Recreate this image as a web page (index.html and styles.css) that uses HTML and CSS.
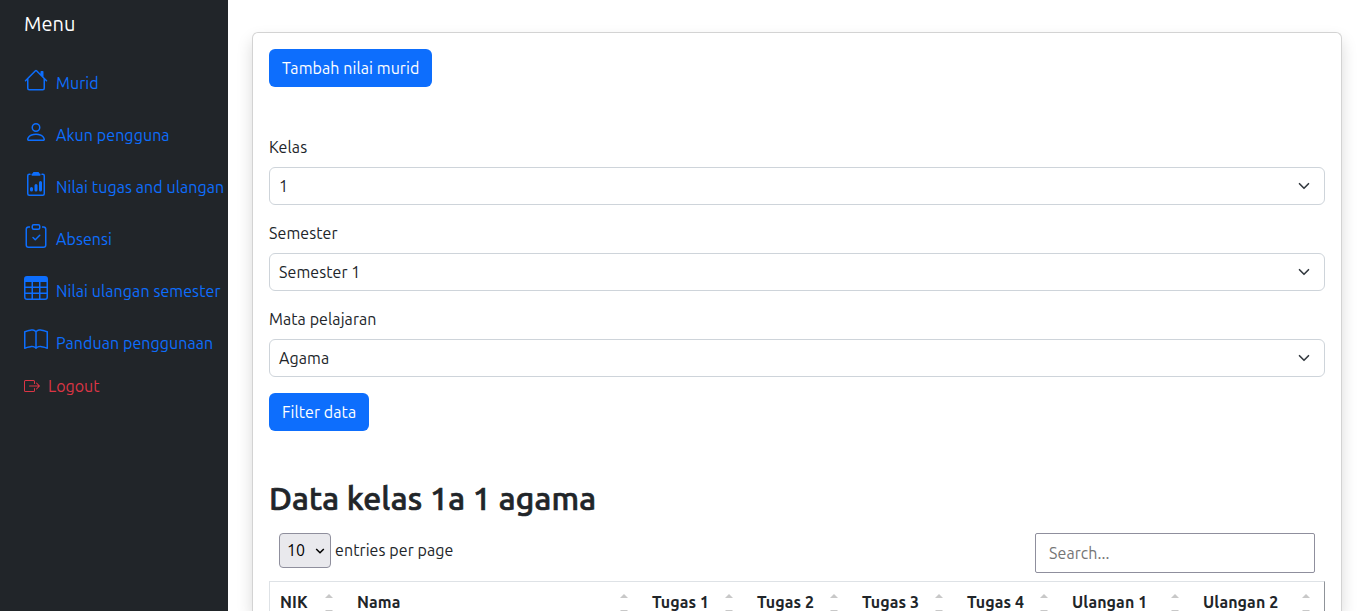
FILE: index.html
```html
<!DOCTYPE html>
<html lang="id">
<head>
<meta charset="utf-8">
<title>Nilai murid</title>
<link rel="stylesheet" href="styles.css">
</head>
<body>
<div class="layout">
  <nav class="sidebar">
    <div class="brand">Menu</div>
    <a class="item"><svg class="icon" viewBox="0 0 16 16"><path d="M8.707 1.5a1 1 0 0 0-1.414 0L.646 8.146a.5.5 0 0 0 .708.708L2 8.207V13.5A1.5 1.5 0 0 0 3.5 15h9a1.5 1.5 0 0 0 1.5-1.5V8.207l.646.647a.5.5 0 0 0 .708-.708L13 5.793V2.5a.5.5 0 0 0-.5-.5h-1a.5.5 0 0 0-.5.5v1.293zM13 7.207V13.5a.5.5 0 0 1-.5.5h-9a.5.5 0 0 1-.5-.5V7.207l5-5z"/></svg><span>Murid</span></a>
    <a class="item"><svg class="icon" viewBox="0 0 16 16"><path d="M8 8a3 3 0 1 0 0-6 3 3 0 0 0 0 6m2-3a2 2 0 1 1-4 0 2 2 0 0 1 4 0m4 8c0 1-1 1-1 1H3s-1 0-1-1 1-4 6-4 6 3 6 4m-1-.004c-.001-.246-.154-.986-.832-1.664C11.516 10.68 10.289 10 8 10s-3.516.68-4.168 1.332c-.678.678-.83 1.418-.832 1.664z"/></svg><span>Akun pengguna</span></a>
    <a class="item"><svg class="icon" viewBox="0 0 16 16"><path d="M9.5 0a.5.5 0 0 1 .5.5.5.5 0 0 0 .5.5.5.5 0 0 1 .5.5V2a.5.5 0 0 1-.5.5h-5A.5.5 0 0 1 5 2v-.5a.5.5 0 0 1 .5-.5.5.5 0 0 0 .5-.5.5.5 0 0 1 .5-.5z"/><path d="M3 2.5a.5.5 0 0 1 .5-.5H4a.5.5 0 0 0 0-1h-.5A1.5 1.5 0 0 0 2 2.5v12A1.5 1.5 0 0 0 3.5 16h9a1.5 1.5 0 0 0 1.5-1.5v-12A1.5 1.5 0 0 0 12.5 1H12a.5.5 0 0 0 0 1h.5a.5.5 0 0 1 .5.5v12a.5.5 0 0 1-.5.5h-9a.5.5 0 0 1-.5-.5z"/><path d="M10 7a1 1 0 1 1 2 0v5a1 1 0 1 1-2 0zm-6 4a1 1 0 1 1 2 0v1a1 1 0 1 1-2 0zm4-3a1 1 0 0 0-1 1v3a1 1 0 1 0 2 0V9a1 1 0 0 0-1-1"/></svg><span>Nilai tugas and ulangan</span></a>
    <a class="item"><svg class="icon" viewBox="0 0 16 16"><path d="M10.854 7.146a.5.5 0 0 1 0 .708l-3 3a.5.5 0 0 1-.708 0l-1.5-1.5a.5.5 0 1 1 .708-.708L7.5 9.793l2.646-2.647a.5.5 0 0 1 .708 0"/><path d="M4 1.5H3a2 2 0 0 0-2 2V14a2 2 0 0 0 2 2h10a2 2 0 0 0 2-2V3.5a2 2 0 0 0-2-2h-1v1h1a1 1 0 0 1 1 1V14a1 1 0 0 1-1 1H3a1 1 0 0 1-1-1V3.5a1 1 0 0 1 1-1h1z"/><path d="M9.5 1a.5.5 0 0 1 .5.5v1a.5.5 0 0 1-.5.5h-3a.5.5 0 0 1-.5-.5v-1a.5.5 0 0 1 .5-.5zm-3-1A1.5 1.5 0 0 0 5 1.5v1A1.5 1.5 0 0 0 6.5 4h3A1.5 1.5 0 0 0 11 2.5v-1A1.5 1.5 0 0 0 9.5 0z"/></svg><span>Absensi</span></a>
    <a class="item"><svg class="icon" viewBox="0 0 16 16"><path d="M0 2a2 2 0 0 1 2-2h12a2 2 0 0 1 2 2v12a2 2 0 0 1-2 2H2a2 2 0 0 1-2-2zm15 2h-4v3h4zm0 4h-4v3h4zm0 4h-4v3h3a1 1 0 0 0 1-1zm-5 3v-3H6v3zm-5 0v-3H1v2a1 1 0 0 0 1 1zm-4-4h4V8H1zm0-4h4V4H1zm5-3v3h4V4zm4 4H6v3h4z"/></svg><span>Nilai ulangan semester</span></a>
    <a class="item"><svg class="icon" viewBox="0 0 16 16"><path d="M1 2.828c.885-.37 2.154-.769 3.388-.893 1.33-.134 2.458.063 3.112.752v9.746c-.935-.53-2.12-.603-3.213-.493-1.18.12-2.37.461-3.287.811zm7.5-.141c.654-.689 1.782-.886 3.112-.752 1.234.124 2.503.523 3.388.893v9.923c-.918-.35-2.107-.692-3.287-.81-1.094-.111-2.278-.039-3.213.492zM8 1.783C7.015.936 5.587.81 4.287.94c-1.514.153-3.042.672-3.994 1.105A.5.5 0 0 0 0 2.5v11a.5.5 0 0 0 .707.455c.882-.4 2.303-.881 3.68-1.02 1.409-.142 2.59.087 3.223.877a.5.5 0 0 0 .78 0c.633-.79 1.814-1.019 3.222-.877 1.378.139 2.8.62 3.681 1.02A.5.5 0 0 0 16 13.5v-11a.5.5 0 0 0-.293-.455c-.952-.433-2.48-.952-3.994-1.105C10.413.809 8.985.936 8 1.783"/></svg><span>Panduan penggunaan</span></a>
    <a class="item logout"><svg class="icon" viewBox="0 0 16 16"><path d="M10 12.5a.5.5 0 0 1-.5.5h-8a.5.5 0 0 1-.5-.5v-9a.5.5 0 0 1 .5-.5h8a.5.5 0 0 1 .5.5v2a.5.5 0 0 0 1 0v-2A1.5 1.5 0 0 0 9.5 2h-8A1.5 1.5 0 0 0 0 3.5v9A1.5 1.5 0 0 0 1.5 14h8a1.5 1.5 0 0 0 1.5-1.5v-2a.5.5 0 0 0-1 0z"/><path d="M15.854 8.354a.5.5 0 0 0 0-.708l-3-3a.5.5 0 0 0-.708.708L14.293 7.5H5.5a.5.5 0 0 0 0 1h8.793l-2.147 2.146a.5.5 0 0 0 .708.708z"/></svg><span>Logout</span></a>
  </nav>
  <main class="content">
    <section class="card">
      <a class="btn btn-add">Tambah nilai murid</a>
      <div class="field"><label>Kelas</label>
        <div class="select"><span>1</span><svg class="chev" viewBox="0 0 16 16"><path d="m2 5 6 6 6-6"/></svg></div></div>
      <div class="field"><label>Semester</label>
        <div class="select"><span>Semester 1</span><svg class="chev" viewBox="0 0 16 16"><path d="m2 5 6 6 6-6"/></svg></div></div>
      <div class="field"><label>Mata pelajaran</label>
        <div class="select"><span>Agama</span><svg class="chev" viewBox="0 0 16 16"><path d="m2 5 6 6 6-6"/></svg></div></div>
      <a class="btn btn-filter">Filter data</a>
      <h2 class="title">Data kelas 1a 1 agama</h2>
      <div class="toolbar">
        <div class="perpage"><div class="count"><span>10</span><svg class="mini" viewBox="0 0 10 10"><path d="m1.2 3 3.8 3.8 3.8-3.8"/></svg></div><span class="entries">entries per page</span></div>
        <input class="search" type="text" placeholder="Search...">
      </div>
      <div class="thead">
        <div class="th">NIK<i class="sort"></i></div>
        <div class="th">Nama<i class="sort"></i></div>
        <div class="th">Tugas 1<i class="sort"></i></div>
        <div class="th">Tugas 2<i class="sort"></i></div>
        <div class="th">Tugas 3<i class="sort"></i></div>
        <div class="th">Tugas 4<i class="sort"></i></div>
        <div class="th">Ulangan 1<i class="sort"></i></div>
        <div class="th">Ulangan 2<i class="sort"></i></div>
      </div>
    </section>
  </main>
</div>
</body>
</html>
```
FILE: styles.css
```css
* { box-sizing: border-box; }
body {
  margin: 0;
  height: 611px;
  overflow: hidden;
  background: #fff;
  color: #212529;
  font: 16px/24px Ubuntu, "Noto Sans", sans-serif;
  letter-spacing: .08px;
}
.layout { display: flex; height: 611px; }
.sidebar { width: 228px; flex: none; padding: 9px 0 0 24px; background: #212529; white-space: nowrap; }
.brand { height: 59px; font-size: 20px; line-height: 30px; color: #fff; }
.item { display: flex; gap: 8px; height: 52px; color: #0d6efd; }
.item span { padding-top: 3px; }
.icon { width: 24px; height: 24px; flex: none; fill: currentColor; }
.logout { margin-top: -6px; color: #dc3545; letter-spacing: 0; }
.logout .icon { width: 16px; height: 16px; margin-top: 4px; }
.logout span { padding-top: 0; }
.content { flex: 1; padding: 32px 24px 0; }
.card {
  height: 579px;
  padding: 16px 16px 0;
  border: 1px solid #d3d3d3;
  border-bottom: 0;
  border-radius: 6px 6px 0 0;
  background: #fff;
  box-shadow: 0 8px 16px rgba(0, 0, 0, .15);
}
.btn { display: flex; align-items: center; height: 38px; padding-left: 13px; border-radius: 6px; background: #0d6efd; color: #fff; white-space: nowrap; }
.btn-add { width: 163px; margin-bottom: 48px; }
.btn-filter { width: 100px; margin-bottom: 48px; }
.field { margin-bottom: 16px; }
.field label { display: block; height: 32px; }
.select { display: flex; align-items: center; justify-content: space-between; height: 38px; padding: 0 12px 0 9px; border: 1px solid #ced4da; border-radius: 6px; }
.chev { width: 16px; height: 12px; fill: none; stroke: #343a40; stroke-width: 2.2; stroke-linecap: round; stroke-linejoin: round; }
.title { margin: 0 0 15px; font-size: 32px; line-height: 39px; font-weight: 500; letter-spacing: .17px; -webkit-text-stroke: .7px currentColor; }
.toolbar { display: flex; justify-content: space-between; height: 48px; padding: 0 10px; }
.perpage { display: flex; gap: 4px; height: 35px; align-items: center; }
.entries { padding-bottom: 2px; }
.count { display: flex; align-items: center; justify-content: space-between; width: 52px; height: 35px; padding: 0 5px 2px 7px; border: 1px solid #8f8f9d; border-radius: 4px; background: #e9e9ed; color: #000; }
.mini { width: 10px; height: 10px; margin-top: 2px; fill: none; stroke: #000; stroke-width: 1.5; }
.search { width: 280px; height: 40px; padding: 0 13px; border: 1px solid #8f8f9d; border-radius: 2px; font: inherit; letter-spacing: inherit; }
.search::placeholder { color: #757575; }
.thead { display: grid; grid-template-columns: 77px 295px 105px 105px 105px 105px 131px 131px; height: 30px; overflow: hidden; border: 1px solid #dee2e6; border-right-color: #8f9399; border-bottom: 0; font-weight: 700; }
.th { display: flex; justify-content: space-between; padding: 8px 14px 0 10px; white-space: nowrap; }
.sort { display: flex; flex: none; flex-direction: column; justify-content: space-between; width: 8px; height: 20px; margin-top: 4px; }
.sort::before, .sort::after { content: ""; border: 4px solid transparent; }
.sort::before { border-top: 0; border-bottom-color: #c8c8c8; }
.sort::after { border-bottom: 0; border-top-color: #c8c8c8; }
```
